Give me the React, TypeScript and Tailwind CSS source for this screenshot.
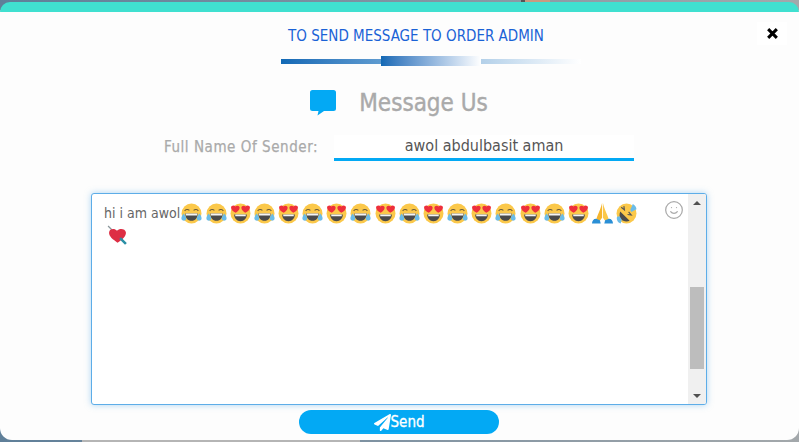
import { Smile } from "lucide-react";

const font = "font-['DejaVu_Sans_Condensed','DejaVu_Sans',sans-serif]";

function Laugh() {
  return (
    <svg viewBox="0 0 20 20" className="w-[21px] h-[21px] shrink-0">
      <circle cx="10" cy="10" r="9.5" fill="#fbc84a" />
      <path d="M3.500 7.500c1-1.500 3-1.800 4.500-.5M12 7c1.500-1.300 3.500-1 4.500.5" fill="none" stroke="#6b5a3a" strokeWidth="1.100" />
      <path d="M4 10h12c0 4.300-2.500 7-6 7s-6-2.700-6-7z" fill="#4a4a4a" />
      <path d="M4.500 10h11v2h-11z" fill="#f4f4f4" />
      <path d="M2.500 10c-1.500 2-2.500 4-2 5.500.6 1.700 3.400 1.800 4.300.2.900-1.600-1-3.800-2.300-5.700zM17.500 10c1.500 2 2.500 4 2 5.500-.6 1.700-3.400 1.800-4.300.2-.9-1.600 1-3.800 2.300-5.700z" fill="#6bbce8" />
    </svg>
  );
}

function HeartEyes() {
  return (
    <svg viewBox="0 0 20 20" className="w-[21px] h-[21px] shrink-0">
      <circle cx="10" cy="10" r="9.5" fill="#fbc84a" />
      <path d="M4 11h12c0 3.800-2.500 6.300-6 6.300S4 14.800 4 11z" fill="#4a4a4a" />
      <path d="M5 11h10v1.500H5z" fill="#f4f4f4" />
      <path d="M5.500 9.300C3 7.800.8 6.300 1 4.200 1.200 2.200 4 1.700 5.200 3.400 6.500 1.900 9.200 2.500 9.200 4.600c0 2-1.900 3.400-3.700 4.700zM14.500 9.300c2.500-1.500 4.700-3 4.500-5.100-.2-2-3-2.500-4.200-.8-1.300-1.500-4-.9-4 1.200 0 2 1.900 3.400 3.700 4.700z" fill="#ee2f3b" />
    </svg>
  );
}

function Pray() {
  return (
    <svg viewBox="0 0 20 20" className="w-[21px] h-[21px] shrink-0">
      <path d="M9.600 0C8.600 4 7 8 5.500 11.500L4 15.500l3.500 1.500 2.100-3z" fill="#f5b52e" />
      <path d="M10.400 0c1 4 2.600 8 4.100 11.500l1.500 4-3.500 1.500-2.100-3z" fill="#fbc84a" />
      <path d="M0 19.500c0-2.500 1.500-4.500 3.800-4.500l3.700 1.500.8 3zM20 19.500c0-2.500-1.500-4.500-3.800-4.500l-3.700 1.500-.8 3z" fill="#2a8fd6" />
    </svg>
  );
}

function Rofl() {
  return (
    <svg viewBox="0 0 20 20" className="w-[21px] h-[21px] shrink-0">
      <circle cx="10" cy="10" r="9.5" fill="#fbc84a" />
      <path d="M5 4l3 2.500-.5-3.500M11 11l3.500.5-2.500-3" fill="none" stroke="#555" strokeWidth="1.100" />
      <path d="M4 8l9 9c-3 1-6.500.5-8.200-1.500S3 11 4 8z" fill="#4a4a4a" />
      <path d="M16 1c2 1 3.500 3 3.500 5l-5 2.500c-1-1.500-1-3 0-4zM1 13c-.8 2.500.5 5.500 3.500 6.500l1-3.500-2-3.500z" fill="#6bbce8" />
    </svg>
  );
}

function PiercedHeart() {
  return (
    <svg viewBox="0 0 20 20" className="w-[21px] h-[21px] shrink-0">
      <path d="M1 1l17 17" stroke="#8a969b" strokeWidth="1.200" />
      <path d="M10 17C6 14 1.500 11 2 7c.4-3.300 5-4.200 7.500-1.500C12 2.800 17.500 3.500 18 7c.5 4-4 7.500-8 10z" fill="#dd2e44" />
      <path d="M12.500 12.500l5.500 5.500" stroke="#2a8fa6" strokeWidth="2.400" />
    </svg>
  );
}

const emojis = [Laugh, Laugh, HeartEyes, Laugh, HeartEyes, Laugh, HeartEyes, Laugh, HeartEyes, Laugh, HeartEyes, Laugh, HeartEyes, Laugh, HeartEyes, Laugh, HeartEyes, Pray, Rofl];

export default function App() {
  return (
    <div className={`h-[442px] w-[799px] overflow-hidden bg-gradient-to-r from-[#5f7f99] to-[#a3a8ab] flex flex-col ${font}`}>
      <div className="h-[2px] flex shrink-0">
        <div className="w-[521px]" />
        <div className="w-[4px] bg-[#555555]" />
        <div className="w-[25px] bg-[#c99a80]" />
      </div>

      <div className="h-[438px] shrink-0 rounded-t-[10px] rounded-b-[12px] bg-[#fdfdfd] border-t-[10px] border-[#40e0d0] flex flex-col items-center relative">
        <button className="absolute right-[12px] top-[10px] w-[30px] h-[23px] bg-white flex items-center justify-center">
          <svg viewBox="0 0 12 12" className="w-[13px] h-[13px]">
            <path d="M2 2l8 8M10 2l-8 8" stroke="#000" strokeWidth="2.800" />
          </svg>
        </button>

        <h2 className="mt-[14px] ml-[33px] text-[15px] leading-[20px] text-[#1a62d6]">TO SEND MESSAGE TO ORDER ADMIN</h2>

        <div className="mt-[10px] ml-[62px] flex items-center w-[300px]">
          <div className="h-[5px] w-[100px] bg-gradient-to-r from-[#1169b5] to-[#5e9bd0]" />
          <div className="h-[10px] w-[100px] bg-gradient-to-r from-[#1169b5] to-white" />
          <div className="h-[5px] w-[100px] bg-gradient-to-r from-[#b3d0e9] to-white" />
        </div>

        <div className="mt-[22px] ml-[-1px] flex items-center">
          <svg viewBox="0 0 26 26" className="w-[26px] h-[26px] mr-[23px]">
            <path d="M2.500 0h21A2.500 2.500 0 0 1 26 2.500v16a2.500 2.500 0 0 1-2.500 2.500H14l-6.500 4.500 1-4.500h-6A2.500 2.500 0 0 1 0 18.500v-16A2.500 2.500 0 0 1 2.500 0z" fill="#03a9f4" />
          </svg>
          <span className="text-[24px] leading-[30px] text-[#aaaaaa] [-webkit-text-stroke:0.4px]">Message Us</span>
        </div>

        <div className="mt-[17px] ml-[-1px] flex items-center h-[26px]">
          <label className="text-[15px] tracking-[0.55px] leading-[20px] text-[#aaaaaa] mb-[3px] mr-[16px] [-webkit-text-stroke:0.25px]">Full Name Of Sender:</label>
          <div className="w-[300px] h-[26px] bg-white border-b-[3px] border-[#03a9f4] text-center text-[16px] leading-[21px] text-[#555555]">
            awol abdulbasit aman
          </div>
        </div>

        <div className="mt-[32px] ml-[-1px] w-[616px] h-[212px] bg-white border border-[#5dade8] rounded-[3px] shadow-[0_0_6px_rgba(93,173,232,0.5)] flex overflow-hidden">
          <div className="flex-1 relative pl-[12px] pr-[30px] pt-[9px]">
            <div className="flex flex-wrap items-center gap-x-[3.17px] gap-y-[1px] text-[14px] text-[#666666]">
              <span className="mr-[-2px]">hi i am awol</span>
              {emojis.map((Emoji, i) => (
                <Emoji key={i} />
              ))}
              <div className="ml-[3px]">
                <PiercedHeart />
              </div>
            </div>
            <Smile className="absolute right-[4px] top-[6px] w-[20px] h-[20px] text-[#aaaaaa]" strokeWidth={1.5} />
          </div>
          <div className="w-[18px] bg-[#f0f0f0] flex flex-col items-center">
            <div className="h-[17px] flex items-center justify-center">
              <div className="w-0 h-0 border-x-[4px] border-x-transparent border-b-[4px] border-b-[#505050]" />
            </div>
            <div className="mt-[76px] w-[14px] h-[82px] bg-[#bdbdbd]" />
            <div className="mt-auto h-[17px] flex items-center justify-center">
              <div className="w-0 h-0 border-x-[4px] border-x-transparent border-t-[4px] border-t-[#505050]" />
            </div>
          </div>
        </div>

        <button className="mt-[5px] ml-[-1px] w-[200px] h-[24px] rounded-full bg-[#03a9f4] text-white text-[15px] [-webkit-text-stroke:0.3px] flex items-center justify-center">
          <svg viewBox="0 0 512 512" className="w-[17px] h-[17px]" fill="currentColor">
            <path d="M476 3L12 271c-18 10-16 35 3 43l106 44 287-253c6-5 13 3 9 9L176 406v84c0 24 29 34 43 16l64-78 125 52c14 6 31-3 33-19L512 28c3-19-19-35-36-25z" />
          </svg>
          Send
        </button>
      </div>

      <div className="h-[2px] flex shrink-0">
        <div className="w-[82px]" />
        <div className="w-[278px] bg-[#b5b5b5]" />
      </div>
    </div>
  );
}
